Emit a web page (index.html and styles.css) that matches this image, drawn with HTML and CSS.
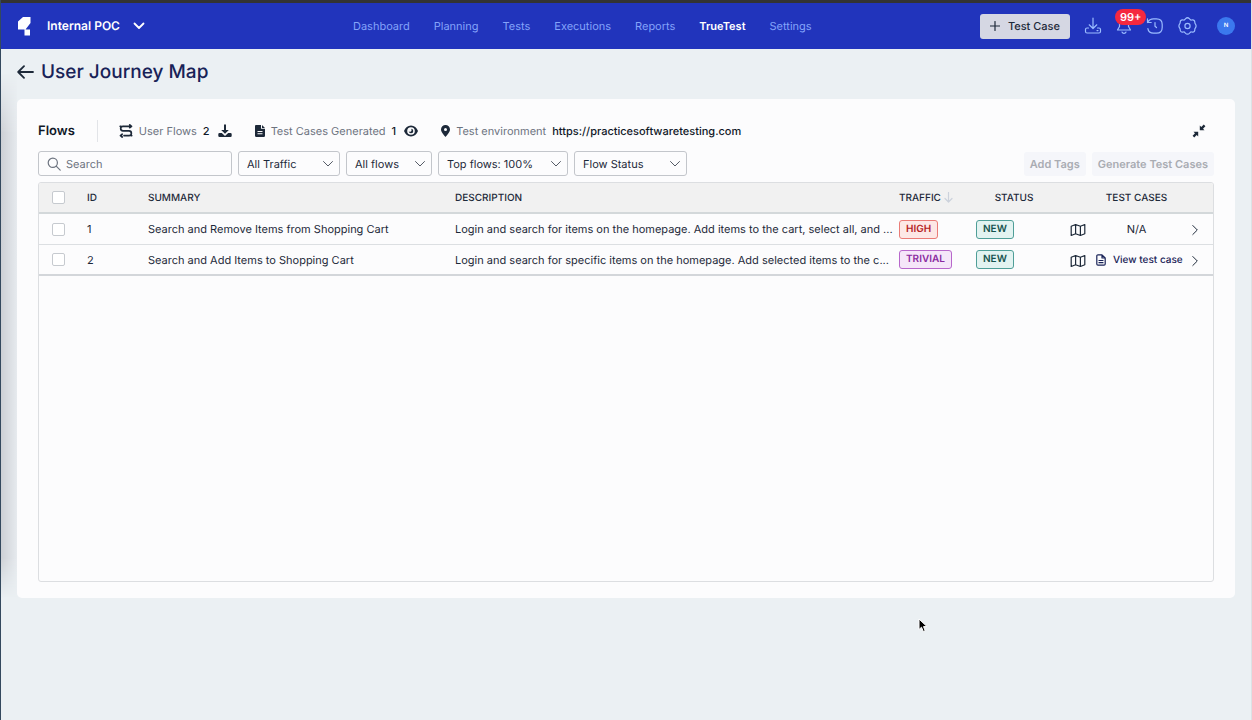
FILE: index.html
```html
<!DOCTYPE html>
<html lang="en">
<head>
  <meta charset="UTF-8">
  <meta name="viewport" content="width=device-width, initial-scale=1.0">
  <title>User Journey Map</title>
  <link rel="stylesheet" href="styles.css">
</head>
<body>
<svg class="sprite" aria-hidden="true">
  <symbol id="chevron-down" viewBox="0 0 12 8"><path d="M1.500 1.500 6 6l4.500-4.500"/></symbol>
  <symbol id="chevron-right" viewBox="0 0 8 12"><path d="M1.800 1.500 6.300 6l-4.500 4.500"/></symbol>
  <symbol id="map" viewBox="0 0 16 14"><path d="M1.200 3.300 5.600 1.500l4.800 1.800 4.400-1.800v9.200l-4.400 1.800-4.800-1.800-4.400 1.800zM5.600 1.500v9.200M10.400 3.300v9.200"/></symbol>
</svg>

<header class="topbar">
  <div class="brand">
    <svg class="logo" width="14" height="19" viewBox="0 0 14 19"><path d="M6 0h7.500v6L8.500 12.500H1V4.500zM7.500 12.500h5.500V18.500h-5.500z"/></svg>
    <button class="project" type="button">Internal POC
      <svg class="line" width="12" height="8"><use href="#chevron-down"/></svg>
    </button>
  </div>
  <nav class="nav">
    <a href="#">Dashboard</a>
    <a href="#">Planning</a>
    <a href="#">Tests</a>
    <a href="#">Executions</a>
    <a href="#">Reports</a>
    <a href="#" class="active">TrueTest</a>
    <a href="#">Settings</a>
  </nav>
  <div class="actions">
    <button class="btn-new" type="button">
      <svg class="line" width="10" height="10" viewBox="0 0 10 10"><path d="M5 .5v9M.5 5h9"/></svg>
      Test Case
    </button>
    <button class="icon-btn" type="button" aria-label="Downloads">
      <svg class="line" width="18" height="18" viewBox="0 0 18 18"><path d="M9 1v10.500M5.200 7.800 9 11.500l3.800-3.700M4.500 11H3a1.500 1.500 0 0 0-1.500 1.500v2A1.500 1.500 0 0 0 3 16h12a1.500 1.500 0 0 0 1.500-1.500v-2A1.500 1.500 0 0 0 15 11h-1.500M13 13.600h1"/></svg>
    </button>
    <button class="icon-btn" type="button" aria-label="Notifications">
      <svg class="line" width="16" height="18" viewBox="0 0 16 18"><path d="M8 1.500a4.500 4.500 0 0 0-4.500 4.500v3.500L1.500 13h13l-2-3.500V6A4.500 4.500 0 0 0 8 1.500zM6 15c.6 1.700 3.400 1.700 4 0"/></svg>
      <span class="count">99+</span>
    </button>
    <button class="icon-btn" type="button" aria-label="History">
      <svg class="line" width="18" height="18" viewBox="0 0 18 18"><path d="M1.500 1.800v3.700h3.700M1.500 5.500C2.800 3 4.500 1.800 7.500 1.800h3c4 0 5.700 2 5.700 5.700v3c0 4-2 5.700-5.700 5.700h-3c-3.500 0-5.200-1.500-5.600-4.500M9 5.500v3.700l1.500 1.300"/></svg>
    </button>
    <button class="icon-btn" type="button" aria-label="Preferences">
      <svg class="line" width="19" height="18" viewBox="0 0 19 18"><path d="M7.600 1.700c1-1 2.800-1 3.800 0l.6.700c.4.500 1 .7 1.600.6l.8-.1c1.300-.1 2.300.8 2.400 2.100v.6c0 .5.200.9.500 1.300.9 1.200.9 3 0 4.200-.3.400-.5.800-.5 1.300v.6c-.1 1.300-1.100 2.200-2.400 2.100l-.8-.1c-.6-.1-1.200.1-1.600.6l-.6.7c-1 1-2.800 1-3.800 0l-.6-.7c-.4-.5-1-.7-1.600-.6l-.8.1c-1.300.1-2.300-.8-2.400-2.100v-.6c0-.5-.2-.9-.5-1.300-.9-1.200-.9-3 0-4.200.3-.4.500-.8.500-1.300V5c.1-1.300 1.100-2.200 2.400-2.100l.8.100c.6.100 1.200-.1 1.600-.6z"/><circle cx="9.500" cy="9" r="2.600"/></svg>
    </button>
    <button class="avatar" type="button" aria-label="Account">N</button>
  </div>
</header>

<main class="page">
  <div class="page-title">
    <a href="#" class="back" aria-label="Back">
      <svg class="line" width="17" height="14" viewBox="0 0 17 14"><path d="M16 7H1.500M7 1.200 1.200 7 7 12.800"/></svg>
    </a>
    <h1>User Journey Map</h1>
  </div>

  <section class="card">
    <div class="summary">
      <h2>Flows</h2>
      <div class="stat">
        <svg class="line" width="14" height="14" viewBox="0 0 14 14"><path d="M1.200 2.300h.8M4.500 2.300h7.500M10.800.9l1.700 1.400-1.700 1.400M4 2.300a2.300 2.300 0 0 0 0 4.600h6a2.300 2.300 0 0 1 0 4.700H5M1.500 11.600h1M12.200 11.600h.5M3.200 10.200 1.500 11.600l1.700 1.400"/></svg>
        <span>User Flows</span>
        <strong>2</strong>
        <button class="plain" type="button" aria-label="Download flows">
          <svg class="solid" width="14" height="14" viewBox="0 0 14 14"><path d="M6 .5h2V6h2.800L7 9.800 3.200 6H6zM1.500 9h2.300L7 12l3.200-3h2.300a1.200 1.200 0 0 1 1.200 1.200v1.600a1.200 1.200 0 0 1-1.200 1.200h-11A1.200 1.200 0 0 1 .3 11.800v-1.600A1.200 1.200 0 0 1 1.500 9z"/></svg>
        </button>
      </div>
      <div class="stat">
        <svg class="solid" width="10" height="12" viewBox="0 0 10 12"><path fill-rule="evenodd" d="M1.300 0H6v3.800h4v7a1.200 1.200 0 0 1-1.200 1.200H1.300A1.200 1.200 0 0 1 0 10.800V1.200A1.200 1.200 0 0 1 1.300 0zM2.500 6v1h5V6zm0 2.300v1h5v-1zM7 0l3 3H7z"/></svg>
        <span>Test Cases Generated</span>
        <strong>1</strong>
        <button class="plain" type="button" aria-label="Show test cases">
          <svg class="solid" width="14" height="12" viewBox="0 0 14 12"><path fill-rule="evenodd" d="M7 .5c3.300 0 5.700 2.300 7 5.500-1.300 3.200-3.700 5.500-7 5.500S1.300 9.200 0 6C1.300 2.800 3.700.5 7 .5zM7 2.200a3.800 3.800 0 1 0 0 7.600 3.800 3.800 0 0 0 0-7.600z"/><path d="M7 3.700a2.300 2.300 0 1 1-2.300 2.600A1.500 1.500 0 0 0 7 3.700z"/></svg>
        </button>
      </div>
      <div class="stat">
        <svg class="solid" width="9" height="12" viewBox="0 0 9 12"><path fill-rule="evenodd" d="M4.500 0A4.500 4.500 0 0 1 9 4.500C9 6.800 6 10.300 4.500 12 3 10.300 0 6.800 0 4.500A4.500 4.500 0 0 1 4.500 0zm0 3a1.500 1.500 0 1 0 0 3 1.500 1.500 0 0 0 0-3z"/></svg>
        <span>Test environment</span>
        <strong>https://practicesoftwaretesting.com</strong>
      </div>
      <button class="plain collapse" type="button" aria-label="Collapse">
        <svg class="solid" width="14" height="14" viewBox="0 0 14 14"><path d="m7.800 1.500 1.500 1.500L11.800.600 13.400 2.200 11 4.700l1.500 1.500H7.800zM1.500 7.800h4.700v4.700L4.700 11l-2.500 2.400L.6 11.800 3 9.300z"/></svg>
      </button>
    </div>

    <div class="filters">
      <label class="search">
        <svg class="line" width="14" height="14" viewBox="0 0 14 14"><circle cx="5.800" cy="5.800" r="4.600"/><path d="m9.200 9.200 4 4"/></svg>
        <input type="text" placeholder="Search" aria-label="Search">
      </label>
      <div class="select traffic-filter">
        <select aria-label="Traffic"><option>All Traffic</option></select>
        <svg class="line" width="12" height="8"><use href="#chevron-down"/></svg>
      </div>
      <div class="select flows-filter">
        <select aria-label="Flows"><option>All flows</option></select>
        <svg class="line" width="12" height="8"><use href="#chevron-down"/></svg>
      </div>
      <div class="select top-filter">
        <select aria-label="Top flows"><option>Top flows: 100%</option></select>
        <svg class="line" width="12" height="8"><use href="#chevron-down"/></svg>
      </div>
      <div class="select status-filter">
        <select aria-label="Flow status"><option>Flow Status</option></select>
        <svg class="line" width="12" height="8"><use href="#chevron-down"/></svg>
      </div>
      <div class="bulk">
        <button type="button" disabled>Add Tags</button>
        <button type="button" disabled>Generate Test Cases</button>
      </div>
    </div>

    <div class="table-box">
      <table>
        <colgroup>
          <col class="c-check"><col class="c-id"><col class="c-summary"><col>
          <col class="c-traffic"><col class="c-status"><col class="c-icon"><col class="c-cases"><col class="c-icon">
        </colgroup>
        <thead>
          <tr>
            <th class="mid"><input type="checkbox" aria-label="Select all"></th>
            <th>ID</th>
            <th>SUMMARY</th>
            <th>DESCRIPTION</th>
            <th><span class="sort">TRAFFIC <svg class="line" width="9" height="11" viewBox="0 0 9 11"><path d="M4.500.5v9.500M1 6.500 4.500 10 8 6.500"/></svg></span></th>
            <th class="mid">STATUS</th>
            <th></th>
            <th class="mid">TEST CASES</th>
            <th></th>
          </tr>
        </thead>
        <tbody>
          <tr>
            <td class="mid"><input type="checkbox" aria-label="Select flow 1"></td>
            <td>1</td>
            <td>Search and Remove Items from Shopping Cart</td>
            <td>Login and search for items on the homepage. Add items to the cart, select all, and ...</td>
            <td><span class="tag high">HIGH</span></td>
            <td><span class="tag new">NEW</span></td>
            <td class="mid"><button class="plain" type="button" aria-label="Open map"><svg class="line" width="16" height="14"><use href="#map"/></svg></button></td>
            <td class="mid">N/A</td>
            <td class="mid"><button class="plain arrow" type="button" aria-label="Details"><svg class="line" width="8" height="12"><use href="#chevron-right"/></svg></button></td>
          </tr>
          <tr>
            <td class="mid"><input type="checkbox" aria-label="Select flow 2"></td>
            <td>2</td>
            <td>Search and Add Items to Shopping Cart</td>
            <td>Login and search for specific items on the homepage. Add selected items to the c...</td>
            <td><span class="tag trivial">TRIVIAL</span></td>
            <td><span class="tag new">NEW</span></td>
            <td class="mid"><button class="plain" type="button" aria-label="Open map"><svg class="line" width="16" height="14"><use href="#map"/></svg></button></td>
            <td class="mid"><a href="#" class="view"><svg class="line" width="10" height="12" viewBox="0 0 10 12"><path d="M6 .8H2A1.200 1.200 0 0 0 .8 2v8A1.200 1.200 0 0 0 2 11.200h6A1.200 1.200 0 0 0 9.200 10V4zM6 .8V4h3.200M3 6.500h4M3 8.700h4"/></svg>View test case</a></td>
            <td class="mid"><button class="plain arrow" type="button" aria-label="Details"><svg class="line" width="8" height="12"><use href="#chevron-right"/></svg></button></td>
          </tr>
        </tbody>
      </table>
    </div>
  </section>
</main>

<svg class="pointer" width="10" height="15" viewBox="0 0 10 15"><path d="M1 1v10.500l2.500-2.300L5.300 13.500l1.900-.8L5.500 8.600H9z"/></svg>
</body>
</html>
```
FILE: styles.css
```css
* {
  box-sizing: border-box;
}
body {
  margin: 0;
  min-height: 100vh;
  font-family: Inter, "Liberation Sans", sans-serif;
  font-size: 11px;
  line-height: 16px;
  text-rendering: geometricPrecision;
  color: #1d2939;
  background-color: #ebf0f3;
  border-left: 1px solid #34495e;
  border-right: 1px solid #dce2e5;
}
button, input, select {
  font: inherit;
  color: inherit;
  text-rendering: inherit;
  margin: 0;
}
button {
  cursor: pointer;
}
a {
  color: inherit;
  text-decoration: none;
}
svg {
  flex: none;
  display: block;
}
.sprite {
  position: absolute;
  width: 0;
  height: 0;
}
.line {
  fill: none;
  stroke: currentColor;
  stroke-width: 1.2;
  stroke-linecap: round;
  stroke-linejoin: round;
}
.solid {
  fill: currentColor;
}
.plain {
  display: inline-flex;
  padding: 0;
  border: 0;
  background: none;
  vertical-align: middle;
}

/* top bar */
.topbar {
  display: flex;
  align-items: center;
  height: 49px;
  padding: 0 16px;
  border-top: 3px solid #333;
  background-color: #2134bc;
  color: #fff;
}
.brand {
  display: flex;
  align-items: center;
  gap: 16px;
  width: 336px;
}
.logo {
  fill: #fff;
}
.project {
  display: flex;
  align-items: center;
  gap: 13px;
  padding: 0;
  border: 0;
  background: none;
  font-size: 12px;
  font-weight: 600;
}
.project svg {
  stroke-width: 1.8;
}
.nav {
  display: flex;
  gap: 24px;
  color: #84a3fa;
}
.nav .active {
  color: #fff;
  font-weight: 600;
}
.actions {
  display: flex;
  align-items: center;
  gap: 14px;
  margin-left: auto;
  color: #9bbcff;
}
.btn-new {
  display: flex;
  align-items: center;
  gap: 8px;
  height: 25px;
  padding: 0 10px;
  border: 0;
  border-radius: 3px;
  background-color: #d5d7e3;
  color: #1d2939;
  font-weight: 500;
}
.icon-btn {
  position: relative;
  padding: 0;
  border: 0;
  background: none;
}
.count {
  position: absolute;
  top: -8px;
  left: -1px;
  padding: 0 5px;
  border-radius: 8px;
  background-color: #f5283f;
  color: #fff;
  font-weight: 600;
}
.avatar {
  width: 18px;
  height: 18px;
  margin-left: 6px;
  padding: 0;
  border: 0;
  border-radius: 50%;
  background-color: #3b78ee;
  color: #fff;
  font-size: 6px;
  font-weight: 600;
}

/* page */
.page {
  position: relative;
  padding: 10px 16px 24px;
}
/* soft shade along the left edge */
.page::before {
  content: "";
  position: absolute;
  top: 24px;
  bottom: 24px;
  left: 0;
  width: 16px;
  background: linear-gradient(to right, #cdd0d5, #e6eaee);
  -webkit-mask-image: linear-gradient(transparent, #000 60px, #000 calc(100% - 40px), transparent);
  mask-image: linear-gradient(transparent, #000 60px, #000 calc(100% - 40px), transparent);
}
.page-title {
  position: relative;
  display: flex;
  align-items: center;
  gap: 7px;
  height: 26px;
  margin-bottom: 14px;
}
.page-title .line {
  stroke-width: 1.8;
}
.back {
  color: #1d2939;
}
h1 {
  margin: 0;
  color: #182257;
  font-size: 19px;
  font-weight: 500;
  line-height: 24px;
}
.card {
  position: relative;
  padding: 21px 21px 16px;
  border-radius: 5px;
  background-color: #fcfcfd;
}
.summary {
  display: flex;
  align-items: center;
  gap: 23px;
  height: 22px;
}
h2 {
  margin: 0 -2px 0 0;
  padding-right: 22px;
  border-right: 1px solid #e2e4e8;
  color: #101828;
  font-size: 13px;
  font-weight: 600;
  line-height: 22px;
}
.stat {
  display: flex;
  align-items: center;
  gap: 6px;
}
.stat span {
  color: #6c737f;
}
.stat strong {
  color: #101828;
  font-weight: 500;
}
.stat .line {
  stroke-width: 1.7;
}
.stat .plain {
  margin-left: 2px;
}
.collapse {
  margin: 0 8px 0 auto;
}
.filters {
  display: flex;
  align-items: center;
  gap: 6px;
  margin: 9px 0 6px;
}
.search {
  display: flex;
  align-items: center;
  gap: 5px;
  width: 194px;
  height: 25px;
  padding: 0 8px;
  border: 1px solid #c3c6cb;
  border-radius: 3px;
  color: #6c737f;
}
.search input {
  flex: 1;
  min-width: 0;
  padding: 0;
  border: 0;
  outline: 0;
  background: none;
}
.search input::placeholder {
  color: #6c737f;
  opacity: 1;
}
.select {
  position: relative;
}
.select select {
  width: 100%;
  height: 25px;
  padding: 0 24px 0 8px;
  border: 1px solid #c3c6cb;
  border-radius: 3px;
  background: none;
  appearance: none;
}
.select svg {
  position: absolute;
  top: 9px;
  right: 6px;
  color: #555b66;
  stroke-width: 1;
  pointer-events: none;
}
.traffic-filter {
  width: 102px;
}
.flows-filter {
  width: 86px;
}
.top-filter {
  width: 130px;
}
.status-filter {
  width: 113px;
}
.bulk {
  display: flex;
  gap: 6px;
  margin-left: auto;
}
.bulk button {
  height: 24px;
  padding: 0 6px;
  border: 0;
  border-radius: 3px;
  background-color: #f5f6fa;
  color: #a9acb2;
  font-weight: 600;
  cursor: default;
}

/* flows table */
.table-box {
  min-height: 400px;
  border: 1px solid #dcdee1;
  border-radius: 3px;
  overflow: hidden;
}
table {
  width: 100%;
  border-collapse: separate;
  border-spacing: 0;
  table-layout: fixed;
}
.c-check {
  width: 40px;
}
.c-id {
  width: 61px;
}
.c-summary {
  width: 307px;
}
.c-traffic {
  width: 77px;
}
.c-status {
  width: 92px;
}
.c-icon {
  width: 36px;
}
.c-cases {
  width: 81px;
}
th, td {
  height: 31px;
  padding: 0 8px;
  border-bottom: 1px solid #dcdfe2;
  text-align: left;
  white-space: nowrap;
}
th {
  border-bottom: 2px solid #d3d8da;
  background-color: #f1f1f1;
  font-size: 10px;
  font-weight: 500;
}
tbody tr:last-child td {
  border-bottom: 2px solid #d3d6da;
}
.mid {
  padding: 0;
  text-align: center;
}
input[type="checkbox"] {
  display: block;
  width: 13px;
  height: 13px;
  margin: 0 13px;
  border: 1px solid #c6cacf;
  border-radius: 2px;
  background-color: #fff;
  appearance: none;
}
.sort {
  display: flex;
  align-items: center;
  gap: 3px;
}
.sort svg {
  color: #ccd2dc;
}
.tag {
  display: inline-block;
  padding: 0 6px;
  border: 1px solid;
  border-radius: 3px;
  font-size: 10px;
  font-weight: 600;
  line-height: 17px;
  vertical-align: middle;
}
.high {
  border-color: #ea7c77;
  background-color: #fde8e6;
  color: #b42324;
}
.trivial {
  border-color: #b767cb;
  background-color: #f5e6f9;
  color: #8a2ba0;
}
.new {
  border-color: #4f9e98;
  background-color: #e3f3f1;
  color: #17544f;
}
.view {
  display: flex;
  align-items: center;
  gap: 7px;
  color: #182257;
  font-size: 10px;
  font-weight: 500;
}
.arrow svg {
  stroke-width: 1;
}
.pointer {
  position: absolute;
  top: 618px;
  left: 918px;
  fill: #000;
  stroke: #fff;
}
```
